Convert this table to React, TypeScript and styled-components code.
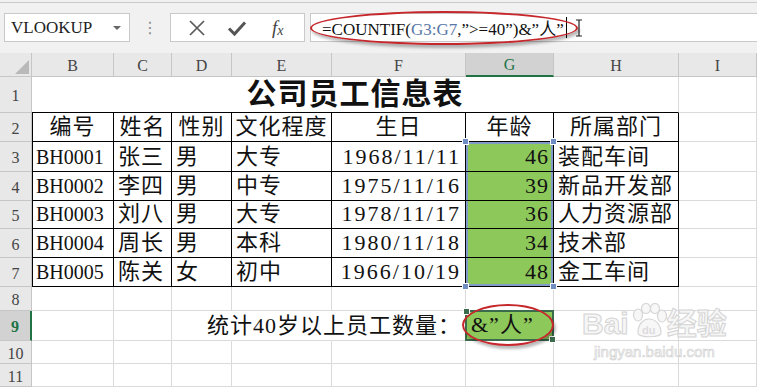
import React from 'react';
import styled, { createGlobalStyle, css } from 'styled-components';

const GlobalStyle = createGlobalStyle`
  html, body {
    margin: 0;
    padding: 0;
    background: #ffffff;
    overflow: hidden;
  }
  * {
    box-sizing: border-box;
  }
`;

const SERIF = `"Liberation Serif", "Noto Sans CJK SC", serif`;
const GREEN = '#217346';
const FILL = '#8dc85b';
const SEL = '#819cc6';

type Align = 'left' | 'center' | 'right';
type Sel = 'top' | 'mid' | 'bottom';

const columns = [
  { key: 'B', width: 82 },
  { key: 'C', width: 58 },
  { key: 'D', width: 60 },
  { key: 'E', width: 100 },
  { key: 'F', width: 134 },
  { key: 'G', width: 88 },
  { key: 'H', width: 125 },
  { key: 'I', width: 78 },
];

const rowHeights = [36, 29, 30, 29, 28, 29, 29, 24, 30, 23, 23];

const heads = ['编号', '姓名', '性别', '文化程度', '生日', '年龄', '所属部门'];

const people = [
  ['BH0001', '张三', '男', '大专', '1968/11/11', '46', '装配车间'],
  ['BH0002', '李四', '男', '中专', '1975/11/16', '39', '新品开发部'],
  ['BH0003', '刘八', '男', '大专', '1978/11/17', '36', '人力资源部'],
  ['BH0004', '周长', '男', '本科', '1980/11/18', '34', '技术部'],
  ['BH0005', '陈关', '女', '初中', '1966/10/19', '48', '金工车间'],
];

const alignOf: Align[] = ['left', 'left', 'left', 'left', 'right', 'right', 'left'];
const spacingOf = [0, 1, 1, 1, 2, 1, 1];
const sizeOf = [20, 22, 22, 22, 22, 22, 22];

const App = () => {
  const rows: React.ReactNode[] = [];

  // row 1 - title
  rows.push(<RowHead key="rh1">1</RowHead>);
  rows.push(
    <Cell key="title" $span={7} $align="center" $bottom="#000">
      <Title>公司员工信息表</Title>
    </Cell>
  );
  rows.push(<Cell key="i1" />);

  // row 2 - heads
  rows.push(<RowHead key="rh2">2</RowHead>);
  heads.forEach((h, i) => {
    rows.push(
      <Cell key={`h${i}`} $align="center" $right="#000" $bottom="#000" $leftEdge={i === 0}>
        {h}
      </Cell>
    );
  });
  rows.push(<Cell key="i2" />);

  // rows 3-7 data
  people.forEach((p, r) => {
    const sel: Sel = r === 0 ? 'top' : r === people.length - 1 ? 'bottom' : 'mid';
    rows.push(<RowHead key={`rh${r + 3}`}>{r + 3}</RowHead>);
    p.forEach((v, i) => {
      const inRange = i === 5;
      rows.push(
        <Cell
          key={`c${r}-${i}`}
          $align={alignOf[i]}
          $spacing={spacingOf[i]}
          $size={sizeOf[i]}
          $right="#000"
          $bottom="#000"
          $leftEdge={i === 0}
          $fill={inRange ? FILL : undefined}
          $sel={inRange ? sel : undefined}
        >
          {v}
          {inRange && sel === 'top' && (
            <>
              <Handle $pos="tl" />
              <Handle $pos="tr" />
            </>
          )}
          {inRange && sel === 'bottom' && (
            <>
              <Handle $pos="bl" />
              <Handle $pos="br" />
            </>
          )}
        </Cell>
      );
    });
    rows.push(<Cell key={`ci${r}`} />);
  });

  // row 8
  rows.push(<RowHead key="rh8">8</RowHead>);
  columns.forEach((c) => rows.push(<Cell key={`e8${c.key}`} />));

  // row 9
  rows.push(
    <RowHead key="rh9" $active>
      9
    </RowHead>
  );
  rows.push(<Cell key="b9" />);
  rows.push(<Cell key="c9" />);
  rows.push(<Cell key="d9" $right="transparent" />);
  rows.push(<Cell key="e9" $right="transparent" />);
  rows.push(
    <Cell key="f9" $align="right">
      统计40岁以上员工数量：
    </Cell>
  );
  rows.push(
    <ActiveCell key="g9" $fill={FILL}>
      &”人”
      <Handle $pos="tl" $dark />
      <Handle $pos="br" $dark />
      <Ring $inset="-8px -2px -7px -5px" />
    </ActiveCell>
  );
  rows.push(<Cell key="h9" />);
  rows.push(<Cell key="i9" />);

  // rows 10-11
  [10, 11].forEach((n) => {
    rows.push(<RowHead key={`rh${n}`}>{n}</RowHead>);
    columns.forEach((c) => rows.push(<Cell key={`e${n}${c.key}`} />));
  });

  return (
    <Page>
      <GlobalStyle />
      <Toolbar>
        <ToolbarInner>
          <NameBox>
            <NameText>VLOOKUP</NameText>
            <Caret />
          </NameBox>
          <Dots>⋮</Dots>
          <ButtonBox>
            <IconButton>
              <svg width="18" height="18" viewBox="0 0 18 18">
                <path d="M2 2 L16 16 M16 2 L2 16" stroke="#5a5a5a" strokeWidth="1.7" fill="none" />
              </svg>
            </IconButton>
            <IconButton>
              <svg width="20" height="18" viewBox="0 0 20 18">
                <path d="M2 9.5 L7.5 15 L18 3.5" stroke="#555" strokeWidth="3" fill="none" />
              </svg>
            </IconButton>
            <IconButton>
              <Fx>
                f<sub>x</sub>
              </Fx>
            </IconButton>
          </ButtonBox>
          <FormulaBox>
            <FormulaText>
              =COUNTIF(<Ref>G3:G7</Ref>,”&gt;=40”)&amp;”人”
            </FormulaText>
            <TextCaret />
            <IBeam>
              <svg width="8" height="18" viewBox="0 0 8 18">
                <path d="M1 1 H7 M4 1 V17 M1 17 H7" stroke="#222" strokeWidth="1.2" fill="none" />
              </svg>
            </IBeam>
            <Ring $inset="-3px auto -4px -1px" $width="268px" />
          </FormulaBox>
        </ToolbarInner>
      </Toolbar>

      <Sheet>
        <Corner>
          <svg width="14" height="14" viewBox="0 0 14 14">
            <path d="M14 0 L14 14 L0 14 Z" fill="#b9b9b9" />
          </svg>
        </Corner>
        {columns.map((c) => (
          <ColHead key={c.key} $active={c.key === 'G'}>
            {c.key}
          </ColHead>
        ))}
        {rows}
        <Watermark>
          <WmLine>
            Bai
            <svg width="38" height="36" viewBox="0 0 38 36">
              <g fill="#f7f7f7" stroke="#d6d6d6" strokeWidth="1.2">
                <ellipse cx="8" cy="12" rx="4.5" ry="6" />
                <ellipse cx="16" cy="5.5" rx="4.5" ry="5" />
                <ellipse cx="25" cy="5.5" rx="4.5" ry="5" />
                <ellipse cx="32" cy="13" rx="4.5" ry="6" />
                <path d="M8 30 C8 20 14 16 19 16 C25 16 31 21 31 30 C31 35 8 35 8 30 Z" />
              </g>
              <text x="12" y="31" fontSize="11" fontFamily="Liberation Sans, sans-serif" fill="#dcdcdc">
                du
              </text>
            </svg>
            经验
          </WmLine>
          <WmSmall>jingyan.baidu.com</WmSmall>
        </Watermark>
      </Sheet>
    </Page>
  );
};

const Page = styled.div`
  width: 757px;
  height: 387px;
  display: flex;
  flex-direction: column;
  background: #ffffff;
  font-family: ${SERIF};
  overflow: hidden;
`;

const Toolbar = styled.div`
  height: 53px;
  padding-top: 2px;
  background: #f1f1f1;
`;

const ToolbarInner = styled.div`
  height: 51px;
  display: flex;
  align-items: center;
  padding: 10px 0 11px 4px;
  border-top: 1px solid #cacaca;
`;

const boxStyle = css`
  height: 29px;
  background: #ffffff;
  border: 1px solid #c9c9c9;
  display: flex;
  align-items: center;
`;

const NameBox = styled.div`
  ${boxStyle};
  width: 126px;
  padding: 0 6px 0 6px;
  justify-content: space-between;
`;

const NameText = styled.span`
  font-size: 17px;
  color: #222;
`;

const Caret = styled.span`
  width: 0;
  height: 0;
  border-left: 4px solid transparent;
  border-right: 4px solid transparent;
  border-top: 4px solid #666;
  margin-right: 2px;
`;

const Dots = styled.span`
  width: 40px;
  text-align: center;
  color: #8a8a8a;
  font-size: 16px;
  font-family: "DejaVu Sans", sans-serif;
`;

const ButtonBox = styled.div`
  ${boxStyle};
  width: 135px;
  padding: 0 6px;
  justify-content: space-around;
`;

const IconButton = styled.span`
  width: 36px;
  display: flex;
  justify-content: center;
  align-items: center;
`;

const Fx = styled.span`
  font-family: "Liberation Serif", serif;
  font-style: italic;
  font-size: 19px;
  color: #444;
  sub {
    font-size: 14px;
    vertical-align: -1px;
  }
`;

const FormulaBox = styled.div`
  ${boxStyle};
  flex: 1;
  margin-left: 5px;
  border-right: none;
  padding-left: 11px;
  position: relative;
`;

const FormulaText = styled.span`
  font-size: 17px;
  color: #111;
  white-space: nowrap;
`;

const Ref = styled.span`
  color: #5777a6;
`;

const TextCaret = styled.span`
  width: 1px;
  height: 21px;
  background: #000;
  margin-left: 2px;
`;

const IBeam = styled.span`
  margin-left: 8px;
  display: flex;
`;

const Ring = styled.span<{ $inset: string; $width?: string }>`
  position: absolute;
  inset: ${({ $inset }) => $inset};
  ${({ $width }) => ($width ? `width: ${$width};` : '')}
  border: 2px solid #c5272c;
  border-radius: 50%;
  box-shadow: 2px 3px 3px rgba(0, 0, 0, 0.28);
  pointer-events: none;
  z-index: 4;
`;

const Sheet = styled.div`
  flex: 1;
  display: grid;
  grid-template-columns: 32px ${columns.map((c) => `${c.width}px`).join(' ')};
  grid-template-rows: 24px ${rowHeights.map((h) => `${h}px`).join(' ')};
  position: relative;
`;

const headStyle = css`
  background: #e8e8e8;
  color: #444;
  font-size: 16px;
  display: flex;
  align-items: center;
  justify-content: center;
  border-right: 1px solid #c6c6c6;
  border-bottom: 1px solid #c6c6c6;
`;

const Corner = styled.div`
  ${headStyle};
  align-items: flex-end;
  justify-content: flex-end;
  padding: 0 2px 2px 0;
`;

const ColHead = styled.div<{ $active?: boolean }>`
  ${headStyle};
  padding-top: 2px;
  ${({ $active }) =>
    $active &&
    `background: #d2d2d2; color: ${GREEN}; border-bottom: 2px solid ${GREEN};`}
`;

const RowHead = styled.div<{ $active?: boolean }>`
  ${headStyle};
  padding-top: 3px;
  ${({ $active }) =>
    $active &&
    `background: #d2d2d2; color: ${GREEN}; font-weight: bold; border-right: 2px solid ${GREEN};`}
`;

const selShadow = (sel: Sel) => {
  const parts = [`inset 2px 0 0 ${SEL}`, `inset -2px 0 0 ${SEL}`];
  if (sel === 'top') parts.push(`inset 0 2px 0 ${SEL}`);
  if (sel === 'bottom') parts.push(`inset 0 -2px 0 ${SEL}`);
  return `box-shadow: ${parts.join(', ')};`;
};

const Cell = styled.div<{
  $align?: Align;
  $spacing?: number;
  $size?: number;
  $right?: string;
  $bottom?: string;
  $span?: number;
  $leftEdge?: boolean;
  $fill?: string;
  $sel?: Sel;
}>`
  position: relative;
  display: flex;
  align-items: flex-end;
  justify-content: ${({ $align }) =>
    $align === 'right' ? 'flex-end' : $align === 'center' ? 'center' : 'flex-start'};
  padding: 0 4px 1px 4px;
  font-size: ${({ $size }) => $size ?? 22}px;
  line-height: 26px;
  letter-spacing: ${({ $spacing }) => $spacing ?? 1}px;
  color: #111;
  white-space: nowrap;
  background: ${({ $fill }) => $fill || 'transparent'};
  border-right: 1px solid ${({ $right }) => $right || '#dadada'};
  border-bottom: 1px solid ${({ $bottom }) => $bottom || '#dadada'};
  ${({ $span }) => ($span ? `grid-column: span ${$span};` : '')}
  ${({ $leftEdge }) => ($leftEdge ? 'box-shadow: inset 1px 0 0 #000;' : '')}
  ${({ $sel }) => ($sel ? selShadow($sel) : '')}
`;

const ActiveCell = styled(Cell)`
  border: 2px solid #3a6b4d;
  margin: -1px 0 0 -1px;
  padding-left: 4px;
  z-index: 3;
`;

const Title = styled.span`
  font-size: 30px;
  line-height: 34px;
  font-weight: bold;
  letter-spacing: 1px;
  color: #111;
`;

const handlePos = {
  tl: 'top: -4px; left: -4px;',
  tr: 'top: -4px; right: -4px;',
  bl: 'bottom: -4px; left: -4px;',
  br: 'bottom: -4px; right: -4px;',
};

const Handle = styled.span<{ $pos: keyof typeof handlePos; $dark?: boolean }>`
  position: absolute;
  ${({ $pos }) => handlePos[$pos]}
  width: 7px;
  height: 7px;
  background: ${({ $dark }) => ($dark ? '#3a6b4d' : '#6f8fc4')};
  border: 1px solid #ffffff;
  z-index: 2;
`;

const Watermark = styled.div`
  position: absolute;
  left: 582px;
  top: 250px;
  display: flex;
  flex-direction: column;
  align-items: center;
  pointer-events: none;
  z-index: 5;
`;

const WmLine = styled.div`
  display: flex;
  align-items: flex-end;
  font-family: "Liberation Sans", "Noto Sans CJK SC", sans-serif;
  font-size: 30px;
  font-weight: bold;
  line-height: 30px;
  color: #f6f6f6;
  -webkit-text-stroke: 1px #d4d4d4;
  svg {
    margin: 0 -1px 0 1px;
  }
`;

const WmSmall = styled.div`
  font-family: "Liberation Sans", sans-serif;
  font-size: 15px;
  margin-top: 4px;
  color: #f6f6f6;
  -webkit-text-stroke: 0.6px #d0d0d0;
`;

export default App;
